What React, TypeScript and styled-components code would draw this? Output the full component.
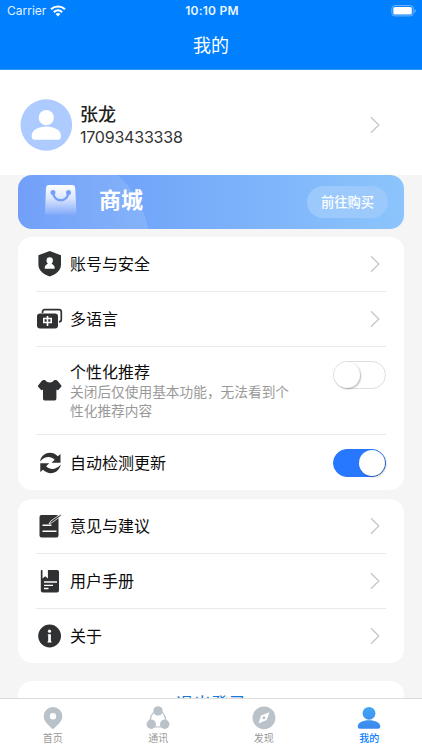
import React from 'react';
import styled, { createGlobalStyle } from 'styled-components';

const GlobalStyle = createGlobalStyle`
  * { box-sizing: border-box; }
  body {
    margin: 0;
    background: #f5f5f5;
    font-family: Inter, "Noto Sans CJK SC", sans-serif;
    color: #111;
  }
`;

const Screen = styled.div`
  width: 422px;
  height: 750px;
  display: flex;
  flex-direction: column;
  overflow: hidden;
  background: #f5f5f5;
`;

const Header = styled.header`
  flex: none;
  height: 70px;
  background: #007fff;
  border-bottom: 1px solid #2e97ff;
  color: #fff;
`;

const StatusBar = styled.div`
  display: grid;
  grid-template-columns: 1fr auto 1fr;
  align-items: center;
  height: 22px;
  padding: 0 5px 0 7px;
  font-size: 12px;
  line-height: 22px;
`;

const Carrier = styled.div`
  display: flex;
  align-items: center;
  gap: 4px;
  color: #e2f1ff;
`;

const Clock = styled.div`
  font-weight: 600;
  letter-spacing: 0.25px;
  color: #e9f5ff;
`;

const BatterySlot = styled.div`
  display: flex;
  justify-content: flex-end;
`;

const Title = styled.h1`
  margin: 0;
  font-size: 18px;
  font-weight: 400;
  line-height: 48px;
  text-align: center;
`;

const Content = styled.main`
  flex: 1;
  min-height: 0;
  overflow: hidden;
`;

const Profile = styled.section`
  display: flex;
  align-items: center;
  height: 105px;
  padding: 4px 41px 0 20px;
  background: #fff;
`;

const ProfileText = styled.div`
  flex: 1;
  padding: 3px 0 0 8px;
`;

const Name = styled.div`
  font-size: 18px;
  font-weight: 500;
  line-height: 23px;
  color: #222;
`;

const Phone = styled.div`
  font-size: 16px;
  line-height: 23px;
  letter-spacing: -0.22px;
  color: #333;
`;

const Banner = styled.section`
  position: relative;
  display: flex;
  align-items: center;
  height: 54px;
  margin: 0 18px;
  padding: 0 16px 0 27px;
  overflow: hidden;
  border-radius: 14px;
  background: linear-gradient(90deg, #6698f8, #8cc5fc);
`;

const Glow = styled.div`
  position: absolute;
  left: -60px;
  top: -24px;
  width: 192px;
  height: 192px;
  border-radius: 50%;
  background: linear-gradient(90deg, rgba(255, 255, 255, 0.05), rgba(255, 255, 255, 0.13));
`;

const BannerTitle = styled.div`
  position: relative;
  flex: 1;
  padding: 0 0 4px 22px;
  font-size: 22px;
  font-weight: 700;
  line-height: 32px;
  color: #fff;
`;

const BuyButton = styled.button`
  width: 81px;
  height: 32px;
  padding: 0;
  border: 0;
  border-radius: 16px;
  background: #9bc9fb;
  color: #fff;
  font: 500 13.3px/30px Inter, "Noto Sans CJK SC", sans-serif;
`;

const Card = styled.section<{ $gap: number }>`
  margin: ${(p) => p.$gap}px 18px 0;
  padding: 0 18px;
  border-radius: 14px;
  background: #fff;
`;

const Row = styled.div<{ $h?: number }>`
  display: flex;
  align-items: center;
  height: ${(p) => p.$h ?? 55}px;
  padding-left: 1px;
  & + & { border-top: 1px solid #e9e9e9; }
`;

const RowText = styled.div`
  flex: 1;
  padding-left: 7px;
`;

const Label = styled.div`
  font-size: 16px;
  line-height: 22px;
  color: #0c0c0c;
`;

const Hint = styled.div`
  width: 226px;
  font-size: 13.7px;
  line-height: 19px;
  color: #999;
`;

const ToggleSlot = styled.div<{ $top?: boolean }>`
  align-self: ${(p) => (p.$top ? 'flex-start' : 'center')};
  margin-top: ${(p) => (p.$top ? 14 : 0)}px;
`;

const Toggle = styled.div<{ $on?: boolean }>`
  display: flex;
  justify-content: ${(p) => (p.$on ? 'flex-end' : 'flex-start')};
  width: 53px;
  height: 28px;
  border: 1px solid ${(p) => (p.$on ? '#2878ff' : '#dedede')};
  border-radius: 14px;
  background: ${(p) => (p.$on ? '#2878ff' : '#fff')};
`;

const Knob = styled.div`
  width: 26px;
  height: 26px;
  border-radius: 50%;
  background: #fff;
  box-shadow: 1px 1px 2px rgba(0, 0, 0, 0.28);
`;

const Logout = styled.div`
  height: 60px;
  padding-top: 10px;
  font-size: 17.6px;
  line-height: 26px;
  text-align: center;
  color: #1677d8;
`;

const TabBar = styled.nav`
  flex: none;
  display: grid;
  grid-template-columns: repeat(4, 1fr);
  height: 52px;
  border-top: 1px solid #dcdcdc;
  background: #fff;
`;

const Tab = styled.div<{ $active?: boolean }>`
  display: flex;
  flex-direction: column;
  align-items: center;
  padding-top: 7px;
  font-size: 10px;
  font-weight: ${(p) => (p.$active ? 500 : 400)};
  line-height: 16px;
  color: ${(p) => (p.$active ? '#087dff' : '#999')};
`;

const Icon = styled.svg`
  display: block;
  flex: none;
`;

const ChevronSlot = styled.div`
  margin-right: 5px;
`;

const DARK = '#303133';
const GREY = '#b9c1c9';

const Chevron = () => (
  <Icon width="12" height="18" viewBox="0 0 12 18" fill="none" stroke="#c6c6c6" strokeWidth="1.3">
    <path d="M2 1.2 9.8 9 2 16.8" />
  </Icon>
);

const RowIcon = ({ children }: { children: React.ReactNode }) => (
  <Icon width="26" height="26" viewBox="0 0 26 26" fill={DARK}>{children}</Icon>
);

const Wifi = () => (
  <Icon width="16" height="12" viewBox="0 0 16 12" fill="none" stroke="#fff" strokeWidth="2.1">
    <path d="M1 4.3C5 .6 11 .6 15 4.3M3.8 7.1c2.5-2.2 5.9-2.2 8.4 0" />
    <path d="M5.6 9C7 7.8 9 7.8 10.4 9L8 11.4Z" fill="#fff" stroke="none" />
  </Icon>
);

const Battery = () => (
  <Icon width="26" height="12" viewBox="0 0 26 12">
    <rect x=".9" y=".6" width="21.3" height="10.3" rx="2.8" fill="none" stroke="#75b9ff" />
    <rect x="2.3" y="2" width="18.5" height="7.5" rx="1.5" fill="#fff" />
    <path d="M23.5 4v4q1.3-.6 1.3-2t-1.3-2" fill="#75b9ff" />
  </Icon>
);

const Avatar = () => (
  <Icon width="52" height="52" viewBox="0 0 52 52">
    <circle cx="26.3" cy="26" r="25.8" fill="#adcbff" />
    <circle cx="26.3" cy="18.7" r="7.6" fill="#fff" />
    <path d="M11.7 36.5c0-5.5 7-9 14.6-9s14.6 3.5 14.6 9v1.2q0 3-3 3H14.7q-3 0-3-3z" fill="#fff" />
  </Icon>
);

const BagIcon = styled(Icon)`
  position: relative;
  margin-bottom: 5px;
`;

const Bag = () => (
  <BagIcon width="32" height="32" viewBox="0 0 32 32">
    <defs>
      <linearGradient id="bag" x1="0" y1="0" x2="0" y2="1">
        <stop offset="0" stopColor="#fff" />
        <stop offset=".45" stopColor="#dae5fe" />
        <stop offset="1" stopColor="#81a9fa" />
      </linearGradient>
    </defs>
    <path d="M4 1H27q3 0 3.2 3l1.3 25q0 2-2 2H2q-2 0-2-2L1 4q.2-3 3-3z" fill="url(#bag)" />
    <g fill="none" stroke="#769ff6" strokeWidth="2.4" strokeLinecap="round">
      <path d="M8 9.5c2.5 9 13 9 15.5 0" />
      <circle cx="8" cy="8.5" r="1.3" fill="#769ff6" />
      <circle cx="23.5" cy="8.5" r="1.3" fill="#769ff6" />
    </g>
  </BagIcon>
);

const ShieldIcon = () => (
  <RowIcon>
    <path d="M12.7 0 24 4.300v9c0 6-4.600 10-11.300 12.300C6 23.300 1.400 19.300 1.400 13.300v-9z" />
    <circle cx="12.7" cy="9.5" r="3.2" fill="#fff" />
    <path d="M11 11.500h3.400c0 2.200 3.200 2 3.200 4.800v1.500H7.800v-1.500c0-2.800 3.200-2.600 3.200-4.800z" fill="#fff" />
  </RowIcon>
);

const LanguageIcon = () => (
  <RowIcon>
    <path d="M5.5 7V6q0-2.300 2.300-2.300H22q2.300 0 2.300 2.300v7.500q0 2.300-2.300 2.300" fill="none" stroke={DARK} strokeWidth="1.7" />
    <rect x="0" y="7.5" width="21" height="15" rx="3" />
    <path d="M6.800 12.500h7.400v4H6.800zM10.500 10v10" fill="none" stroke="#fff" strokeWidth="1.6" />
  </RowIcon>
);

const ShirtIcon = () => (
  <RowIcon>
    <path d="M8.200 2c1.200 3.200 7.800 3.200 9 0h1.500q1 0 2 1L24.300 7.500q.5.700-.1 1.300L21.300 12q-.7.600-1.500-.2l-.4-.4v9.400q0 1.700-1.700 1.700H7.700q-1.700 0-1.700-1.700v-9.400l-.4.400q-.8.800-1.500.2L1.200 8.800q-.6-.6-.1-1.300L4.700 3q1-1 2-1z" />
  </RowIcon>
);

const RefreshIcon = () => (
  <RowIcon>
    <path d="M3 11.500C5 2 15 .5 20.800 6.200L23.500 4v8.700h-9l3.200-3C13.500 5.800 7.800 6.200 3 11.500z" />
    <path d="M23.800 14.500C21.500 24 12 25.500 6 19.800L3.300 22v-8.700h9l-3.200 3c4.200 3.900 10 3.500 14.700-1.800z" />
  </RowIcon>
);

const NoteIcon = () => (
  <RowIcon>
    <rect x="2.5" y="2" width="19" height="22.5" rx="2" />
    <path d="M5.500 12.200h9M5.500 18.200h14" stroke="#fff" strokeWidth="1.5" />
    <path d="m12 11 1.700-3L23.300 1.500l1 1.300L15 9.500z" fill={DARK} stroke="#fff" strokeWidth=".8" />
  </RowIcon>
);

const BookIcon = () => (
  <RowIcon>
    <path d="M4.500 2H5.500v8.500l2.700-2.300 2.700 2.300V2H20q2 0 2 2v18.500q0 2-2 2H6q-2.200 0-2.200-2V3q0-1 .7-1z" />
    <path d="M7 14h13M7 17.300h9M7 20.500h4.500" stroke="#fff" strokeWidth="1.300" />
  </RowIcon>
);

const InfoIcon = () => (
  <RowIcon>
    <circle cx="12.6" cy="13" r="11.4" />
    <circle cx="12.5" cy="8.2" r="1.6" fill="#fff" />
    <path d="M10.800 11.200h3.100v7h.6v1.300h-3.900v-1.300h.6v-5.900h-.4z" fill="#fff" />
  </RowIcon>
);

const PinIcon = () => (
  <Icon width="24" height="24" viewBox="0 0 24 24">
    <path fillRule="evenodd" d="M12 1a9.300 9.300 0 0 0-9.300 9.500c0 4.500 4.500 8.500 9.300 12.700 4.800-4.200 9.300-8.200 9.300-12.700A9.300 9.300 0 0 0 12 1zm0 6a3.200 3.200 0 1 1 0 6.400A3.200 3.200 0 0 1 12 7z" fill={GREY} />
  </Icon>
);

const ContactsIcon = () => (
  <Icon width="24" height="24" viewBox="0 0 24 24" fill={GREY}>
    <path d="M9 5.500C5 8 4 12 4 17M15 5.500c4 2.500 5 6.500 5 11.500M8 20.500q4 1 8 0" fill="none" stroke={GREY} strokeWidth="1.2" />
    <circle cx="12" cy="4.9" r="4.7" />
    <circle cx="5.3" cy="18.2" r="4.7" />
    <circle cx="18.7" cy="18.2" r="4.7" />
  </Icon>
);

const CompassIcon = () => (
  <Icon width="24" height="24" viewBox="0 0 24 24">
    <circle cx="12" cy="11.8" r="11.4" fill={GREY} />
    <path d="M17.500 6.200 14.800 14 6.500 17.500 9 9.500z" fill="#fff" />
    <circle cx="11.9" cy="11.8" r="1.5" fill={GREY} />
  </Icon>
);

const MeIcon = () => (
  <Icon width="24" height="24" viewBox="0 0 24 24">
    <defs>
      <linearGradient id="me" gradientUnits="userSpaceOnUse" x1="12" y1="1" x2="12" y2="23">
        <stop offset="0" stopColor="#42a5f5" />
        <stop offset="1" stopColor="#3c87ef" />
      </linearGradient>
    </defs>
    <circle cx="12" cy="7.3" r="6.4" fill="url(#me)" />
    <path d="M.7 20.500c0-4 5-6.300 11.300-6.300s11.300 2.300 11.300 6.300q0 2.300-2.300 2.300H3Q.7 22.800.7 20.500z" fill="url(#me)" />
  </Icon>
);

const LinkRow = ({ icon, label, h }: { icon: React.ReactNode; label: string; h?: number }) => (
  <Row $h={h}>
    {icon}
    <RowText><Label>{label}</Label></RowText>
    <ChevronSlot><Chevron /></ChevronSlot>
  </Row>
);

export default function App() {
  return (
    <>
      <GlobalStyle />
      <Screen>
        <Header>
          <StatusBar>
            <Carrier>Carrier<Wifi /></Carrier>
            <Clock>10:10 PM</Clock>
            <BatterySlot><Battery /></BatterySlot>
          </StatusBar>
          <Title>我的</Title>
        </Header>
        <Content>
          <Profile>
            <Avatar />
            <ProfileText>
              <Name>张龙</Name>
              <Phone>17093433338</Phone>
            </ProfileText>
            <Chevron />
          </Profile>
          <Banner>
            <Glow />
            <Bag />
            <BannerTitle>商城</BannerTitle>
            <BuyButton>前往购买</BuyButton>
          </Banner>
          <Card $gap={8}>
            <LinkRow icon={<ShieldIcon />} label="账号与安全" h={54} />
            <LinkRow icon={<LanguageIcon />} label="多语言" />
            <Row $h={88}>
              <ShirtIcon />
              <RowText>
                <Label>个性化推荐</Label>
                <Hint>关闭后仅使用基本功能，无法看到个性化推荐内容</Hint>
              </RowText>
              <ToggleSlot $top><Toggle><Knob /></Toggle></ToggleSlot>
            </Row>
            <Row $h={56}>
              <RefreshIcon />
              <RowText><Label>自动检测更新</Label></RowText>
              <ToggleSlot><Toggle $on><Knob /></Toggle></ToggleSlot>
            </Row>
          </Card>
          <Card $gap={9}>
            <LinkRow icon={<NoteIcon />} label="意见与建议" h={54} />
            <LinkRow icon={<BookIcon />} label="用户手册" />
            <LinkRow icon={<InfoIcon />} label="关于" />
          </Card>
          <Card $gap={18}>
            <Logout>退出登录</Logout>
          </Card>
        </Content>
        <TabBar>
          <Tab><PinIcon />首页</Tab>
          <Tab><ContactsIcon />通讯</Tab>
          <Tab><CompassIcon />发现</Tab>
          <Tab $active><MeIcon />我的</Tab>
        </TabBar>
      </Screen>
    </>
  );
}
